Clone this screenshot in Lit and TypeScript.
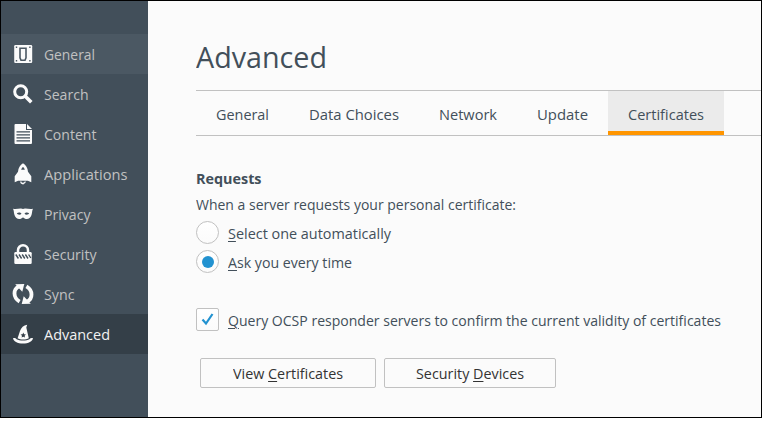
import { LitElement, html, css, svg } from "lit";
import { customElement, property, state } from "lit/decorators.js";
import { classMap } from "lit/directives/class-map.js";
import { styleMap } from "lit/directives/style-map.js";

const FAMILY = '"Open Sans", "Noto Sans", sans-serif';
const measurer = document.createElement("canvas").getContext("2d")!;

/** A one-line label condensed to fill a given advance width; "&" marks the access key. */
@customElement("fit-label")
class FitLabel extends LitElement {
  @property() text = "";
  @property({ type: Number }) width = 0;
  @property({ type: Number }) size = 15;
  @property({ type: Number }) weight = 400;

  static styles = css`
    :host { display: block; white-space: nowrap; }
    .text { display: block; transform-origin: 0 0; }
    .key { text-decoration: underline; text-decoration-thickness: 1px; text-underline-offset: 2px; }
  `;

  render() {
    const at = this.text.indexOf("&");
    const plain = this.text.replace("&", "");
    measurer.font = `${this.weight} ${this.size}px ${FAMILY}`;
    const scale = this.width / measurer.measureText(plain).width;
    const style = styleMap({
      width: `${this.width}px`,
      fontSize: `${this.size}px`,
      fontWeight: `${this.weight}`,
      transform: `scaleX(${scale.toFixed(4)})`,
    });
    return html`<span class="text" style=${style}>${at < 0
      ? plain
      : html`${plain.slice(0, at)}<span class="key">${plain[at]}</span>${plain.slice(at + 1)}`}</span>`;
  }
}

const icons: Record<string, unknown> = {
  general: svg`<rect x="1.200" y="1" width="18" height="18" rx="1.200"/><path d="M7 4.300h6v9.500l-1 2.400H8l-1-2.400z" class="slot"/><path class="cut" d="M2.800 2.500h1.400v1.400H2.800zM16.200 2.500h1.400v1.400h-1.400zM2.800 16.100h1.400v1.400H2.800zM16.200 16.100h1.400v1.400h-1.400z"/>`,
  search: svg`<circle cx="7.700" cy="7.700" r="6" fill="none" stroke="currentColor" stroke-width="3"/><path d="M12 12l6.300 6.300" stroke="currentColor" stroke-width="3.600"/>`,
  content: svg`<path d="M2.500 0H13v6h6v13a1 1 0 0 1-1 1H2.500a1 1 0 0 1-1-1V1a1 1 0 0 1 1-1z"/><path d="M14 0l5 5h-5z"/><path class="cut" d="M3.500 7.200h13.500v1.400H3.500zM3.500 10.200h13.500v1.400H3.500zM3.500 13.200h13.500v1.400H3.500zM3.500 16.200h13.500v1.400H3.500z"/>`,
  applications: svg`<path fill-rule="evenodd" d="M10-.8c2.900 1.600 4.700 4.600 5 8.600l3.300 4.400v6.100l-3.400-1.600H5.100l-3.400 1.600v-6.100L5 7.800c.3-4 2.100-7 5-8.600zM8.200 5.800h3.600c-.2-1.200-.9-2.200-1.800-2.800-.9.600-1.600 1.600-1.800 2.800z"/><path d="M7.800 17.400a2.200 2 0 0 0 4.400 0" fill="none" stroke="currentColor" stroke-width="1.200"/><path d="M9 19.200h2l-1 1.800z"/>`,
  privacy: svg`<path fill-rule="evenodd" d="M0 4.700c3 .8 5.500-.3 8-.2.800.1 1.400.5 2 .5s1.200-.4 2-.5c2.500-.1 5 1 8 .2-1 1.500-.7 4-1.500 6.300-1 3.300-3.500 4.500-5.500 4-1.500-.4-2-1.600-3-1.600s-1.500 1.200-3 1.600c-2 .5-4.500-.7-5.500-4C.7 8.700 1 6.200 0 4.700zM3.800 9.600c1 1.400 3.700 1.500 4.700.1-1-1.600-3.400-1.700-4.700-.1zM16.200 9.600c-1 1.400-3.700 1.500-4.700.1 1-1.600 3.400-1.700 4.700-.1z"/>`,
  security: svg`<path d="M5 8.500V6.200a5 4.900 0 0 1 10 0v2.300" fill="none" stroke="currentColor" stroke-width="2.500"/><rect x="1.300" y="8" width="17.400" height="12" rx="1.200"/><path class="slash" d="M2.800 10.500l2.600 4M6 10.500l2.600 4M9.200 10.500l2.600 4M12.400 10.500l2.600 4M15.600 10.500l2.200 3.500"/>`,
  sync: svg`<path d="M6.600 17.600C-.2 13.500 0 5.200 6 2.400" fill="none" stroke="currentColor" stroke-width="3.800"/><path d="M2.200 .3L11.300 0 9.300 7.700z"/><path d="M13.400 2.400c6.800 4.100 6.600 12.400.6 15.200" fill="none" stroke="currentColor" stroke-width="3.800"/><path d="M17.800 19.700L8.700 20l2-7.700z"/>`,
  advanced: svg`<path fill-rule="evenodd" d="M4.600 14.300L7 7C8.200 3.800 10.500 1.300 14.200.8L13.300 3.500l2.500 10.800c-2.800 1.600-8.400 1.600-11.200 0zM10.300 8.600l-.8 1.700-1.900.2 1.400 1.300-.4 1.800 1.700-.9 1.700.9-.4-1.800 1.400-1.300-1.900-.2z"/><path d="M0 14.300c1.600-.7 2.600-.1 3.600.9 3 1.800 9.800 1.800 12.800 0 1-1 2-1.600 3.600-.9-.3 3-4.600 5.300-10 5.300S.3 17.300 0 14.300z"/>`,
};

const categories = [
  { id: "general", label: "General", width: 51 },
  { id: "search", label: "Search", width: 44.5 },
  { id: "content", label: "Content", width: 52.5 },
  { id: "applications", label: "Applications", width: 83.5 },
  { id: "privacy", label: "Privacy", width: 46.5 },
  { id: "security", label: "Security", width: 52.5 },
  { id: "sync", label: "Sync", width: 30.5 },
  { id: "advanced", label: "Advanced", width: 66 },
];

const tabs = [
  { label: "General", width: 53 },
  { label: "Data Choices", width: 90 },
  { label: "Network", width: 58 },
  { label: "Update", width: 51 },
  { label: "Certificates", width: 76 },
];

@customElement("app-root")
class AppRoot extends LitElement {
  @state() private request = "ask";
  @state() private ocsp = true;

  static styles = css`
    :host { display: block; height: 421px; background: #fff; font-family: "Open Sans", "Noto Sans", sans-serif; font-size: 15px; color: #424f5a; }
    * { box-sizing: border-box; }
    .window { display: flex; width: 762px; height: 418px; border: 1px solid #000; background: #fbfbfb; overflow: hidden; }
    .sidebar { flex: none; width: 147px; padding-top: 33px; background: #424f5a; color: #c1c1c1; }
    .category { display: flex; align-items: center; height: 40px; padding-left: 12px; gap: 11px; --row: #424f5a; background: var(--row); line-height: 40px; }
    .category.hover { --row: #4b5863; }
    .category.selected { --row: #343f48; color: #f2f2f2; }
    .icon { flex: none; width: 20px; height: 20px; overflow: visible; color: #fbfbfb; fill: currentColor; }
    .cut { fill: var(--row); }
    .slot { fill: none; stroke: var(--row); stroke-width: 1.6; }
    .slash { fill: none; stroke: var(--row); stroke-width: 1.4; }
    .main { flex: 1; min-width: 0; padding: 37px 0 0 48px; }
    .title { margin: 0; height: 52px; line-height: 39px; font-weight: 400; }
    .tabs { display: flex; height: 46px; border: solid #c1c1c1; border-width: 1px 0; }
    .tab { padding: 0 20px; line-height: 46px; }
    .tab.selected { background: #ebebeb; border-bottom: 4px solid #ff9500; }
    .heading { margin: 31px 0 0; height: 22px; line-height: 22px; }
    .text { height: 32px; line-height: 30px; }
    .option { display: flex; align-items: flex-start; gap: 9px; height: 29px; line-height: 25px; }
    .option.query { margin-top: 29px; height: 50px; }
    .radio, .check { flex: none; display: grid; place-items: center; width: 23px; height: 23px; border: 1px solid #c1c1c1; background: linear-gradient(#fff, #fbfbfb); }
    .radio { border-radius: 50%; }
    .check { border-radius: 2px; }
    .dot { width: 12px; height: 12px; border-radius: 50%; background: #2292d0; }
    .tick { width: 21px; height: 21px; fill: none; stroke: #2292d0; stroke-width: 2.2; }
    .buttons { display: flex; gap: 8px; padding-left: 4px; }
    .button { display: flex; justify-content: center; height: 30px; border: 1px solid #c1c1c1; border-radius: 2px; line-height: 29px; color: #333; background: #fbfbfb; }
    .button.view { width: 176px; }
    .button.devices { width: 172px; }
  `;

  private radio(id: string, label: string, width: number) {
    return html`<div class="option" @click=${() => (this.request = id)}>
      <span class="radio">${this.request === id ? html`<span class="dot"></span>` : ""}</span>
      <fit-label text=${label} width=${width}></fit-label>
    </div>`;
  }

  render() {
    return html`<div class="window">
      <nav class="sidebar">
        ${categories.map((c) => html`<div class=${classMap({ category: true, hover: c.id === "general", selected: c.id === "advanced" })}>
          <svg class="icon" viewBox="0 0 20 20">${icons[c.id]}</svg>
          <fit-label text=${c.label} width=${c.width}></fit-label>
        </div>`)}
      </nav>
      <main class="main">
        <h1 class="title"><fit-label text="Advanced" width="131" size="28.5"></fit-label></h1>
        <div class="tabs">
          ${tabs.map((t) => html`<div class=${classMap({ tab: true, selected: t.label === "Certificates" })}>
            <fit-label text=${t.label} width=${t.width}></fit-label>
          </div>`)}
        </div>
        <div class="heading"><fit-label text="Requests" width="65.5" weight="700"></fit-label></div>
        <div class="text"><fit-label text="When a server requests your personal certificate:" width="320"></fit-label></div>
        <div class="requests">
          ${this.radio("auto", "&Select one automatically", 163)}
          ${this.radio("ask", "&Ask you every time", 124)}
        </div>
        <div class="option query" @click=${() => (this.ocsp = !this.ocsp)}>
          <span class="check">${this.ocsp ? html`<svg class="tick" viewBox="0 0 21 21"><path d="M5.500 10.500l3.500 4 6.500-9.500"/></svg>` : ""}</span>
          <fit-label text="&Query OCSP responder servers to confirm the current validity of certificates" width="493"></fit-label>
        </div>
        <div class="buttons">
          <div class="button view"><fit-label text="View &Certificates" width="110"></fit-label></div>
          <div class="button devices"><fit-label text="Security &Devices" width="108"></fit-label></div>
        </div>
      </main>
    </div>`;
  }
}
